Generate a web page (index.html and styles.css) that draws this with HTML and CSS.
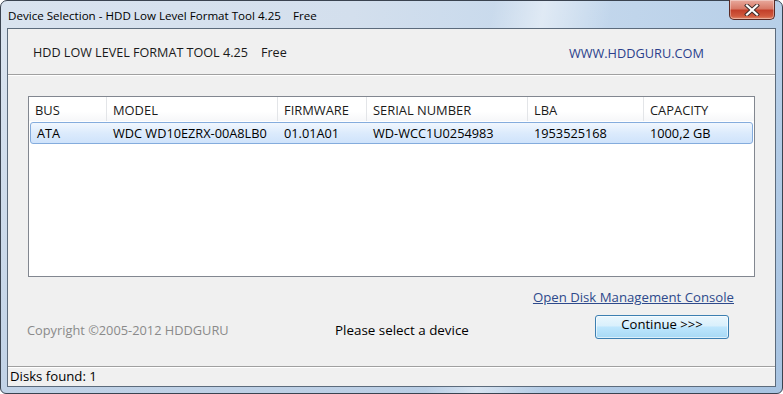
FILE: index.html
```html
<!DOCTYPE html>
<html>
<head>
<meta charset="utf-8">
<link rel="stylesheet" href="styles.css">
</head>
<body>
<div class="window">
  <div class="titlebar">
    <span class="title">Device Selection - HDD Low Level Format Tool 4.25    Free</span>
    <div class="close">
      <svg width="16" height="12" viewBox="0 0 16 12">
        <path d="M3 1.5 L13 10.5 M13 1.5 L3 10.5" stroke="#3a2a28" stroke-width="4" stroke-linecap="square" fill="none"/>
        <path d="M3 1.5 L13 10.5 M13 1.5 L3 10.5" stroke="#ffffff" stroke-width="2.2" stroke-linecap="square" fill="none"/>
      </svg>
    </div>
  </div>
  <div class="client">
    <div class="header">
      <span class="app">HDD LOW LEVEL FORMAT TOOL 4.25    Free</span>
      <span class="site">WWW.HDDGURU.COM</span>
    </div>
    <div class="body">
      <div class="list">
        <div class="lhead">
          <div class="hc">BUS</div>
          <div class="hc">MODEL</div>
          <div class="hc">FIRMWARE</div>
          <div class="hc">SERIAL NUMBER</div>
          <div class="hc">LBA</div>
          <div class="hc">CAPACITY</div>
        </div>
        <div class="lrow sel">
          <div class="rc">ATA</div>
          <div class="rc">WDC WD10EZRX-00A8LB0</div>
          <div class="rc">01.01A01</div>
          <div class="rc">WD-WCC1U0254983</div>
          <div class="rc">1953525168</div>
          <div class="rc">1000,2 GB</div>
        </div>
      </div>
      <div class="linkrow"><a class="link" href="#">Open Disk Management Console</a></div>
      <div class="bottomrow">
        <span class="copy">Copyright ©2005-2012 HDDGURU</span>
        <span class="msg">Please select a device</span>
        <button class="btn">Continue &gt;&gt;&gt;</button>
      </div>
    </div>
    <div class="status">Disks found: 1</div>
  </div>
</div>
</body>
</html>
```
FILE: styles.css
```css
* { box-sizing: border-box; }
html, body { margin: 0; padding: 0; background: #ffffff; }
body {
  font-family: "Open Sans", "Noto Sans", "DejaVu Sans", sans-serif;
  font-size: 12.8px;
  color: #000;
}
.window {
  width: 783px;
  height: 394px;
  border: 1px solid #3a4350;
  border-radius: 7px 7px 6px 6px;
  padding: 0 6px 6px 6px;
  display: flex;
  flex-direction: column;
  background:
    linear-gradient(100deg, rgba(255,255,255,0) 58%, rgba(255,255,255,0.45) 64%, rgba(255,255,255,0) 72%),
    linear-gradient(180deg, rgba(255,255,255,0) 0%, rgba(255,255,255,0) 10%, rgba(120,160,205,0.25) 100%),
    linear-gradient(90deg, #d9e3ef 0%, #d3dfed 45%, #c3d7ec 75%, #b7cfe8 100%);
}
.titlebar {
  height: 27px;
  display: flex;
  align-items: flex-start;
  justify-content: space-between;
  padding-left: 1px;
}
.title {
  white-space: pre;
  font-size: 11.6px;
  line-height: 16px;
  margin-top: 7px;
  color: #000;
}
.close {
  width: 46px;
  height: 20px;
  margin-top: -1px;
  margin-right: 1px;
  border: 1px solid #5a2a24;
  border-top: none;
  border-radius: 0 0 5px 5px;
  background: linear-gradient(180deg, #e8a99d 0%, #d87a68 45%, #c3402a 55%, #d05a3e 85%, #e28a6c 100%);
  box-shadow: inset 0 0 0 1px rgba(255,255,255,0.35);
  display: flex;
  align-items: center;
  justify-content: center;
}
.client {
  flex: 1;
  border: 1px solid #5c6b7c;
  background: #f0f0f0;
  display: flex;
  flex-direction: column;
}
.header {
  height: 46px;
  border-bottom: 1px solid #a0a0a0;
  box-shadow: 0 1px 0 #ffffff;
  display: flex;
  align-items: center;
  justify-content: space-between;
  padding: 2px 71px 0 25px;
}
.app { white-space: pre; color: #1a1a1a; font-size: 12.6px; }
.site { color: #2b3f8c; font-size: 12.75px; }
.body {
  flex: 1;
  padding: 21px 20px 0 20px;
  display: flex;
  flex-direction: column;
}
.list {
  height: 181px;
  border: 1px solid #828790;
  background: #ffffff;
}
.lhead {
  height: 24px;
  display: grid;
  grid-template-columns: 78px 171px 89px 161px 116px 1fr;
  background: linear-gradient(180deg, #ffffff 0%, #ffffff 60%, #f6f7f9 100%);
}
.hc {
  padding: 2px 0 0 6px;
  line-height: 22px;
  border-right: 1px solid #e3e5e8;
  color: #1a1a1a;
  font-size: 12.9px;
}
.hc:last-child { border-right: none; }
.lrow {
  height: 22px;
  margin: 1px 1px 0 1px;
  display: grid;
  grid-template-columns: 76px 171px 89px 161px 116px 1fr;
}
.sel {
  border: 1px solid #84acdd;
  border-radius: 3px;
  background: linear-gradient(180deg, #f1f7fe 0%, #dcebfc 50%, #cfe3fb 100%);
}
.rc {
  padding-left: 6px;
  line-height: 20px;
  color: #000;
  font-size: 12.75px;
}
.linkrow {
  display: flex;
  justify-content: flex-end;
  padding-right: 21px;
  margin-top: 11px;
  height: 18px;
}
.link {
  color: #2e4a8c;
  text-decoration: underline;
  font-size: 13.2px;
  line-height: 18px;
}
.bottomrow {
  margin-top: 9px;
  display: grid;
  grid-template-columns: 307px 260px 134px;
  align-items: start;
}
.copy {
  color: #8a8a8a;
  margin-left: -1px;
  padding-top: 6px;
  line-height: 18px;
  font-size: 12.8px;
}
.msg {
  padding-top: 6px;
  line-height: 18px;
  color: #000;
  font-size: 13.4px;
}
.btn {
  width: 134px;
  height: 24px;
  border: 1px solid #3c7fb1;
  border-radius: 3px;
  background: linear-gradient(180deg, #eaf6fd 0%, #d9f0fc 45%, #bee6fd 50%, #a7d9f5 100%);
  box-shadow: inset 0 0 0 1px rgba(255,255,255,0.6);
  font-family: "Open Sans", "Noto Sans", "DejaVu Sans", sans-serif;
  font-size: 13.1px;
  color: #000;
  padding: 0 0 6px 0;
  line-height: 16px;
}
.status {
  height: 20px;
  border-top: 1px solid #a0a0a0;
  box-shadow: inset 0 1px 0 #ffffff;
  padding-left: 2px;
  line-height: 19px;
  font-size: 13.2px;
}
```
